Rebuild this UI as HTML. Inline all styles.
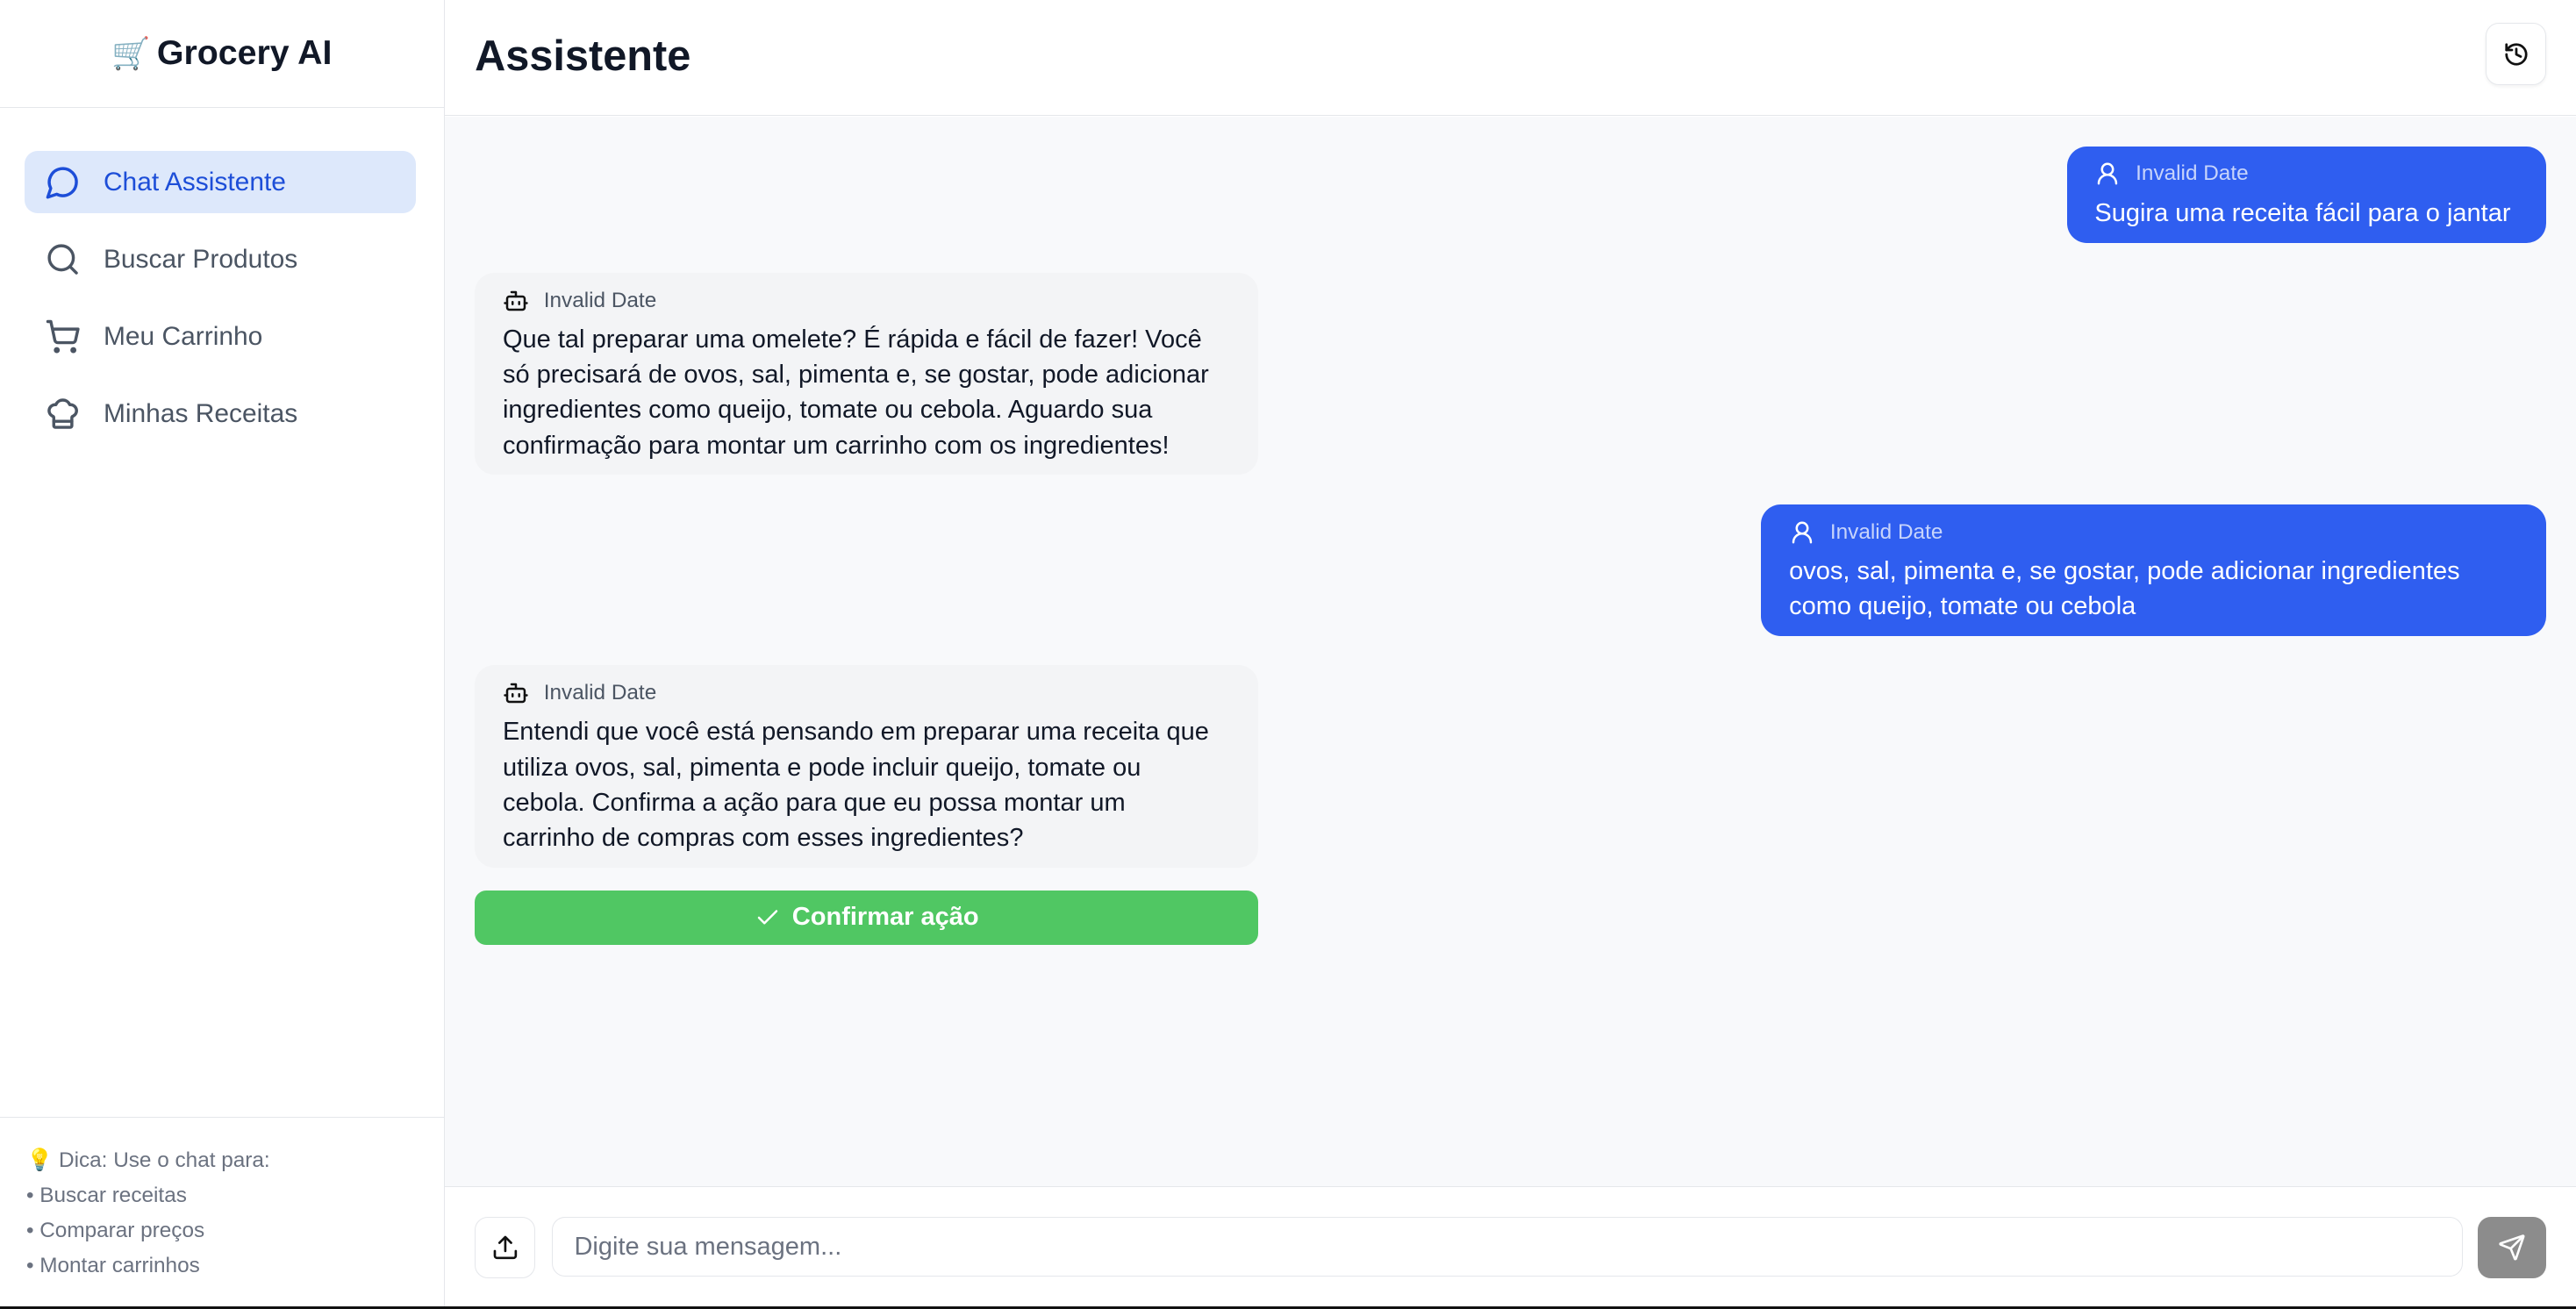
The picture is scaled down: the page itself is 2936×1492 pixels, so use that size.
<!DOCTYPE html>
<html><head><meta charset="utf-8"><style>
html{zoom:1.87245}
body{margin:0;width:1568px;height:797px;overflow:hidden;background:#fff;font-family:"Liberation Sans",sans-serif;position:relative;color:#111827}
.a{position:absolute}
.side{left:0;top:0;width:270px;height:797px;border-right:1px solid #e5e7eb;background:#fff}
.nav{position:absolute;left:15px;width:238px;height:38px;border-radius:8px;display:flex;align-items:center;font-size:16px;font-weight:500;color:#4b5563}
.nav svg{margin-left:12px;margin-right:14px}
.nav.act{background:#dde8fb;color:#1d4ed8}
.bub{position:absolute;border-radius:12px;padding:0 17px;box-sizing:border-box;white-space:nowrap}
.bot{background:#f3f4f6;color:#111827;font-size:15.5px;line-height:21.5px}
.usr{background:#2f5ef0;color:#fff;font-size:15.5px;line-height:21.5px}
.hd{display:flex;align-items:center;font-size:13px;height:20px;margin-bottom:3px}
.hd svg{margin-right:9px}
.bot .hd{color:#4b5563}.usr .hd{color:#c7d4fb}
</style></head><body>
<div class="a side">
 <div class="a" style="left:0;top:0;width:270px;height:65px;border-bottom:1px solid #e5e7eb;display:flex;align-items:center;justify-content:center;font-size:21px;font-weight:700;color:#111827"><span style="font-size:19px;margin-right:4px">🛒</span>Grocery AI</div>
 <div class="nav act" style="top:92px"><svg width="22" height="22" viewBox="0 0 24 24" fill="none" stroke="#1d4ed8" stroke-width="2" stroke-linecap="round" stroke-linejoin="round"><path d="M7.9 20A9 9 0 1 0 4 16.1L2 22Z"/></svg>Chat Assistente</div>
 <div class="nav" style="top:139px"><svg width="22" height="22" viewBox="0 0 24 24" fill="none" stroke="#4b5563" stroke-width="2" stroke-linecap="round"><circle cx="11" cy="11" r="8"/><path d="m21 21-4.3-4.3"/></svg>Buscar Produtos</div>
 <div class="nav" style="top:186px"><svg width="22" height="22" viewBox="0 0 24 24" fill="none" stroke="#4b5563" stroke-width="2" stroke-linecap="round" stroke-linejoin="round"><circle cx="8" cy="21" r="1"/><circle cx="19" cy="21" r="1"/><path d="M2.05 2.05h2l2.66 12.42a2 2 0 0 0 2 1.58h9.78a2 2 0 0 0 1.95-1.57l1.65-7.43H5.12"/></svg>Meu Carrinho</div>
 <div class="nav" style="top:233px"><svg width="22" height="22" viewBox="0 0 24 24" fill="none" stroke="#4b5563" stroke-width="2" stroke-linecap="round" stroke-linejoin="round"><path d="M17 21a1 1 0 0 0 1-1v-5.35c0-.46.32-.86.75-1.03a4 4 0 0 0-2.13-7.62 5 5 0 0 0-9.24 0 4 4 0 0 0-2.13 7.62c.43.17.75.57.75 1.03V20a1 1 0 0 0 1 1Z"/><path d="M6 17h12"/></svg>Minhas Receitas</div>
 <div class="a" style="left:0;top:680px;width:270px;border-top:1px solid #e5e7eb"></div>
 <div class="a" style="left:16px;top:696px;font-size:13px;line-height:21.3px;color:#6b7280">💡 Dica: Use o chat para:<br>• Buscar receitas<br>• Comparar preços<br>• Montar carrinhos</div>
</div>
<div class="a" style="left:271px;top:0;right:0;height:70px;border-bottom:1px solid #e5e7eb;background:#fff"></div>
<div class="a" style="left:289px;top:19px;font-size:26px;font-weight:700;color:#111827">Assistente</div>
<div class="a" style="left:1513px;top:14px;width:37px;height:38px;border:1px solid #e5e7eb;border-radius:8px;box-sizing:border-box;display:flex;align-items:center;justify-content:center;box-shadow:0 1px 2px rgba(0,0,0,.05)"><svg width="16" height="16" viewBox="0 0 24 24" fill="none" stroke="#111" stroke-width="2.2" stroke-linecap="round" stroke-linejoin="round"><path d="M3 12a9 9 0 1 0 9-9 9.75 9.75 0 0 0-6.74 2.74L3 8"/><path d="M3 3v5h5"/><path d="M12 7v5l4 2"/></svg></div>
<div class="a" style="left:271px;top:71px;right:0;height:651px;background:#f8f9fb"></div>
<div class="a" style="left:271px;top:722px;right:0;border-top:1px solid #e5e7eb"></div>

<div class="bub usr" style="left:1258px;top:89px;width:292px;height:59px;padding-top:7px"><div class="hd"><svg width="16" height="16" viewBox="0 0 24 24" fill="none" stroke="#fff" stroke-width="2" stroke-linecap="round"><circle cx="12" cy="8" r="5"/><path d="M20 21a8 8 0 0 0-16 0"/></svg>Invalid Date</div>Sugira uma receita fácil para o jantar</div>

<div class="bub bot" style="left:289px;top:166px;width:477px;height:123px;padding-top:7px"><div class="hd"><svg width="16" height="16" viewBox="0 0 24 24" fill="none" stroke="#111" stroke-width="2" stroke-linecap="round" stroke-linejoin="round"><path d="M12 8V4H8"/><rect width="16" height="12" x="4" y="8" rx="2"/><path d="M2 14h2M20 14h2M15 13v2M9 13v2"/></svg>Invalid Date</div>Que tal preparar uma omelete? É rápida e fácil de fazer! Você<br>só precisará de ovos, sal, pimenta e, se gostar, pode adicionar<br>ingredientes como queijo, tomate ou cebola. Aguardo sua<br>confirmação para montar um carrinho com os ingredientes!</div>

<div class="bub usr" style="left:1072px;top:307px;width:478px;height:80px;padding-top:7px"><div class="hd"><svg width="16" height="16" viewBox="0 0 24 24" fill="none" stroke="#fff" stroke-width="2" stroke-linecap="round"><circle cx="12" cy="8" r="5"/><path d="M20 21a8 8 0 0 0-16 0"/></svg>Invalid Date</div>ovos, sal, pimenta e, se gostar, pode adicionar ingredientes<br>como queijo, tomate ou cebola</div>

<div class="bub bot" style="left:289px;top:405px;width:477px;height:123px;padding-top:7px"><div class="hd"><svg width="16" height="16" viewBox="0 0 24 24" fill="none" stroke="#111" stroke-width="2" stroke-linecap="round" stroke-linejoin="round"><path d="M12 8V4H8"/><rect width="16" height="12" x="4" y="8" rx="2"/><path d="M2 14h2M20 14h2M15 13v2M9 13v2"/></svg>Invalid Date</div>Entendi que você está pensando em preparar uma receita que<br>utiliza ovos, sal, pimenta e pode incluir queijo, tomate ou<br>cebola. Confirma a ação para que eu possa montar um<br>carrinho de compras com esses ingredientes?</div>

<div class="a" style="left:289px;top:542px;width:477px;height:33px;background:#50c763;border-radius:7px;display:flex;align-items:center;justify-content:center;color:#fff;font-size:15.5px;font-weight:700"><svg width="16" height="16" viewBox="0 0 24 24" fill="none" stroke="#fff" stroke-width="2" stroke-linecap="round" stroke-linejoin="round" style="margin-right:7px"><path d="M20 6 9 17l-5-5"/></svg>Confirmar ação</div>

<div class="a" style="left:289px;top:741px;width:37px;height:37px;border:1px solid #e5e7eb;border-radius:8px;box-sizing:border-box;display:flex;align-items:center;justify-content:center;background:#fff"><svg width="17" height="17" viewBox="0 0 24 24" fill="none" stroke="#111" stroke-width="2" stroke-linecap="round" stroke-linejoin="round"><path d="M21 15v4a2 2 0 0 1-2 2H5a2 2 0 0 1-2-2v-4"/><path d="M12 3v12M7 8l5-5 5 5"/></svg></div>
<div class="a" style="left:336px;top:741px;width:1163px;height:36px;border:1px solid #e5e7eb;border-radius:8px;box-sizing:border-box;background:#fff;font-size:15.5px;color:#6b7280;padding-left:13px;line-height:36px">Digite sua mensagem...</div>
<div class="a" style="left:1508px;top:741px;width:42px;height:37px;background:#8c8c8c;border-radius:8px;display:flex;align-items:center;justify-content:center"><svg width="17" height="17" viewBox="0 0 24 24" fill="none" stroke="#fff" stroke-width="2" stroke-linecap="round" stroke-linejoin="round"><path d="M14.54 21.69a.5.5 0 0 0 .94-.03l6.5-19a.5.5 0 0 0-.64-.64l-19 6.5a.5.5 0 0 0-.03.94l7.93 3.18a2 2 0 0 1 1.11 1.11z"/><path d="m21.85 2.15-10.94 10.93"/></svg></div>
<div class="a" style="left:0;top:795px;width:1568px;height:2px;background:#111"></div>
</body></html>
